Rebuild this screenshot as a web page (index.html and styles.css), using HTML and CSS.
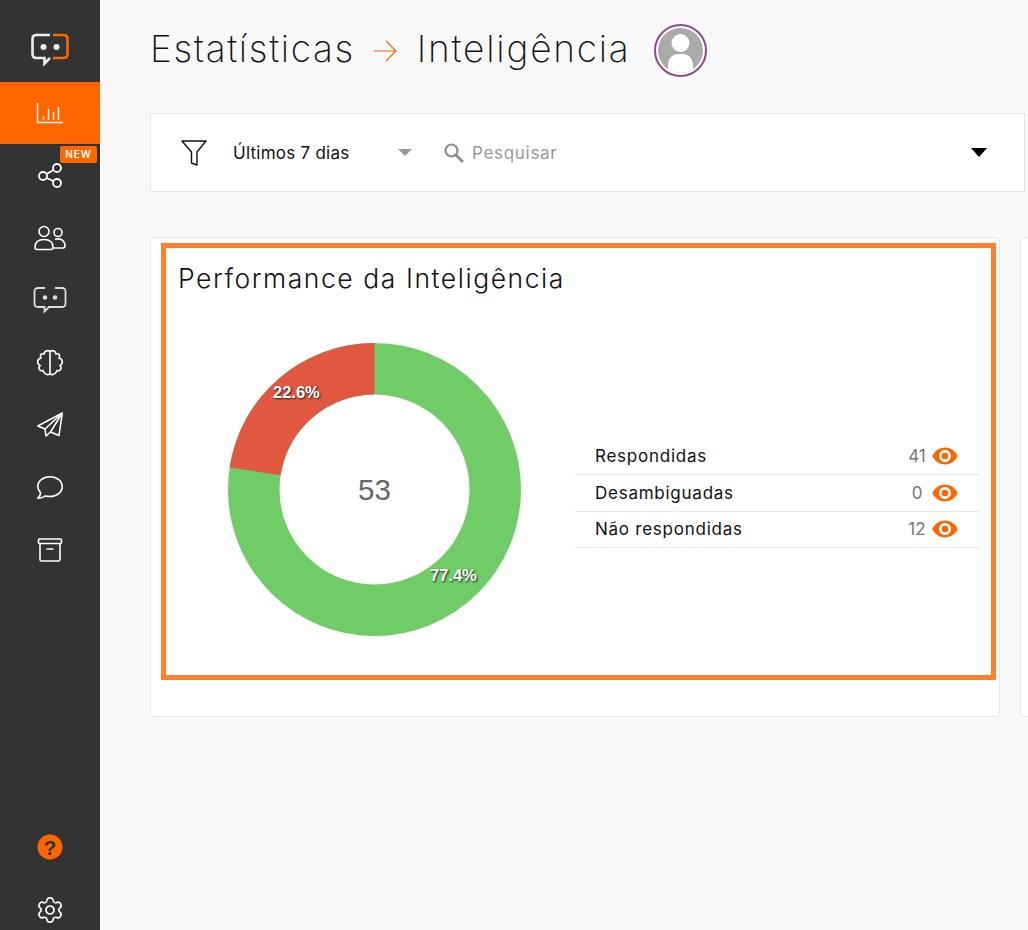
FILE: index.html
```html
<!DOCTYPE html>
<html lang="pt-BR">
<head>
    <meta charset="UTF-8">
    <title>Estatísticas - Inteligência</title>
    <link rel="stylesheet" href="styles.css">
</head>
<body>
    <aside class="sidebar">
        <div class="logo">
            <svg width="40" height="34" viewBox="0 0 40 34" fill="none" stroke-width="2.6">
                <path d="M20 2H6.5Q2.5 2 2.500 6V21Q2.500 25 6.500 25H14.500V30.500L20 25" stroke="#eee"/>
                <path d="M23 2H33.500Q37.500 2 37.500 6V21Q37.500 25 33.500 25H23" stroke="#f60"/>
                <circle cx="13.500" cy="14" r="3" fill="#eee" stroke="none"/>
                <circle cx="26.500" cy="14" r="3" fill="#eee" stroke="none"/>
            </svg>
        </div>
        <nav class="nav">
            <a class="nav-item active" href="#">
                <svg width="28" height="24" viewBox="0 0 28 24" fill="none" stroke="#fff" stroke-width="1.400">
                    <path d="M1.500 2V21.500H27M7.500 19V15M12.500 19V8M17.500 19V11M22.500 19V6"/>
                </svg>
            </a>
            <a class="nav-item" href="#">
                <svg width="26" height="28" viewBox="0 0 26 28" fill="none" stroke="#fff" stroke-width="1.800">
                    <circle cx="6" cy="14" r="4"/>
                    <circle cx="20" cy="6" r="4"/>
                    <circle cx="20" cy="21" r="4"/>
                    <path d="M9.500 12L16.500 8M9.500 16L16.500 19"/>
                </svg>
                <span class="badge">NEW</span>
            </a>
            <a class="nav-item" href="#">
                <svg width="34" height="26" viewBox="0 0 34 26" fill="none" stroke="#fff" stroke-width="1.600">
                    <circle cx="11" cy="6.500" r="5"/>
                    <path d="M2 22.500C2 17 5 14.500 11 14.500C17 14.500 20 17 20 22.500Q20 24.500 18 24.500H4Q2 24.500 2 22.500Z"/>
                    <circle cx="25" cy="7.500" r="4"/>
                    <path d="M22 14.200C28 13 32 15.500 32 21Q32 23 30 23H20.500"/>
                </svg>
            </a>
            <a class="nav-item" href="#">
                <svg width="34" height="28" viewBox="0 0 34 28" fill="none" stroke="#ddd" stroke-width="1.800">
                    <path d="M12 2H5Q1.500 2 1.500 5.500V17.500Q1.500 21 5 21H11.500V25.500L16 21H29Q32.500 21 32.500 17.500V5.500Q32.500 2 29 2H22"/>
                    <circle cx="12" cy="11.500" r="2.300" fill="#ddd" stroke="none"/>
                    <circle cx="22" cy="11.500" r="2.300" fill="#ddd" stroke="none"/>
                </svg>
            </a>
            <a class="nav-item" href="#">
                <svg width="28" height="28" viewBox="0 0 28 28" fill="none" stroke="#fff" stroke-width="1.600">
                    <path d="M14 2.500V25C11.500 26.500 8 25 7 21.500C4 22.500 1.500 19.500 4 16.500C0.500 14.500 1 10 5 9C3.500 6 5 4 8 5C8.500 1.500 12 1 14 2.500Z"/>
                    <path d="M14 2.500C16 1 19.500 1.500 20 5C23 4 24.500 6 23 9C27 10 27.500 14.500 24 16.500C26.500 19.500 24 22.500 21 21.500C20 25 16.500 26.500 14 25"/>
                </svg>
            </a>
            <a class="nav-item" href="#">
                <svg width="28" height="28" viewBox="0 0 28 28" fill="none" stroke="#fff" stroke-width="1.600" stroke-linejoin="round">
                    <path d="M26.300 2L1.800 15L9 18L10 25L14.500 21L23 24.500Z"/>
                    <path d="M26.300 2L9 18M14.500 21L26.300 2"/>
                </svg>
            </a>
            <a class="nav-item" href="#">
                <svg width="28" height="26" viewBox="0 0 28 26" fill="none" stroke="#fff" stroke-width="1.600" stroke-linejoin="round">
                    <path d="M14 1.800C7 1.800 1.800 6 1.800 11.500C1.800 14 3 16 4.500 17.500C4.500 20 3.500 22 1.800 23.200C5 23.300 7.500 22.500 9 21C10.500 21.300 12 21.500 14 21.500C21 21.500 26.200 17 26.200 11.500C26.200 6 21 1.800 14 1.800Z"/>
                </svg>
            </a>
            <a class="nav-item" href="#">
                <svg width="28" height="26" viewBox="0 0 28 26" fill="none" stroke="#fff" stroke-width="1.600">
                    <rect x="2.500" y="2" width="23" height="4.500" rx="1"/>
                    <path d="M4 6.500V22.500Q4 24 5.500 24H22.500Q24 24 24 22.500V6.500M10.500 12H17.500"/>
                </svg>
            </a>
        </nav>
        <div class="nav-bottom">
            <a class="nav-item" href="#">
                <svg width="26" height="26" viewBox="0 0 26 26">
                    <circle cx="13" cy="13" r="12.500" fill="#f60"/>
                    <text class="help-mark" x="13" y="20.500" text-anchor="middle">?</text>
                </svg>
            </a>
            <a class="nav-item" href="#">
                <svg width="28" height="28" viewBox="-14 -14 28 28" fill="none" stroke="#fff" stroke-width="1.700">
                    <defs>
                        <path id="tooth" d="M-4.400 -7.600C-3.400 -8 -3.200 -8.600 -3 -10C-2.800 -11.600 -2 -12.200 0 -12.200C2 -12.200 2.800 -11.600 3 -10C3.200 -8.600 3.400 -8 4.400 -7.600"/>
                    </defs>
                    <use href="#tooth"/>
                    <use href="#tooth" transform="rotate(60)"/>
                    <use href="#tooth" transform="rotate(120)"/>
                    <use href="#tooth" transform="rotate(180)"/>
                    <use href="#tooth" transform="rotate(240)"/>
                    <use href="#tooth" transform="rotate(300)"/>
                    <circle r="4"/>
                </svg>
            </a>
        </div>
    </aside>

    <main class="main">
        <header class="page-header">
            <h1>Estatísticas</h1>
            <svg class="crumb-arrow" width="24" height="22" viewBox="0 0 24 22" fill="none" stroke="#f60" stroke-width="1.200">
                <path d="M1 11H23M13 1L23 11L13 21"/>
            </svg>
            <h1 class="crumb-current">Inteligência</h1>
            <div class="avatar">
                <svg width="45" height="45" viewBox="0 0 45 45">
                    <defs>
                        <clipPath id="avatar-clip"><circle cx="22.500" cy="22.500" r="22.500"/></clipPath>
                    </defs>
                    <g clip-path="url(#avatar-clip)">
                        <rect width="45" height="45" fill="#aaa"/>
                        <circle cx="22.500" cy="15" r="9" fill="#fff"/>
                        <rect x="10" y="26" width="25" height="24" rx="10" fill="#fff"/>
                    </g>
                </svg>
            </div>
        </header>

        <section class="filter-bar">
            <svg class="filter-icon" width="26" height="26" viewBox="0 0 26 26" fill="none" stroke="#111" stroke-width="1.400" stroke-linejoin="round">
                <path d="M1 1H25L16 12V25L10.500 23V12Z"/>
            </svg>
            <span class="period">Últimos 7 dias</span>
            <span class="caret caret-gray"></span>
            <svg class="search-icon" width="20" height="20" viewBox="0 0 20 20" fill="none" stroke="#8c8c8c" stroke-width="2.200">
                <circle cx="7.500" cy="7.500" r="6"/>
                <path d="M12 12L19 19" stroke-width="2.800"/>
            </svg>
            <span class="search-text">Pesquisar</span>
            <span class="caret caret-black"></span>
        </section>

        <section class="cards">
            <article class="card">
                <div class="frame">
                    <h2>Performance da Inteligência</h2>
                    <div class="frame-body">
                        <div class="donut">
                            <svg width="293" height="293" viewBox="0 0 293 293">
                                <circle cx="146.500" cy="146.500" r="120.750" fill="none" stroke="#6fcc67" stroke-width="51.500"/>
                                <path d="M146.500 0A146.500 146.500 0 0 0 1.660 124.500L52.600 132.200A95 95 0 0 1 146.500 51.500Z" fill="#e05840"/>
                            </svg>
                            <span class="donut-total">53</span>
                            <span class="slice-label label-red">22.6%</span>
                            <span class="slice-label label-green">77.4%</span>
                        </div>
                        <ul class="legend">
                            <li class="legend-row">
                                <span class="legend-name">Respondidas</span>
                                <span class="legend-count">41</span>
                                <svg class="eye" width="26" height="18" viewBox="0 0 26 18"><use href="#eye-icon"/></svg>
                            </li>
                            <li class="legend-row">
                                <span class="legend-name">Desambiguadas</span>
                                <span class="legend-count">0</span>
                                <svg class="eye" width="26" height="18" viewBox="0 0 26 18"><use href="#eye-icon"/></svg>
                            </li>
                            <li class="legend-row">
                                <span class="legend-name">Não respondidas</span>
                                <span class="legend-count">12</span>
                                <svg class="eye" width="26" height="18" viewBox="0 0 26 18"><use href="#eye-icon"/></svg>
                            </li>
                        </ul>
                    </div>
                </div>
            </article>
            <article class="card"></article>
        </section>
    </main>

    <svg width="0" height="0" class="sprites">
        <symbol id="eye-icon" viewBox="0 0 26 18">
            <path fill-rule="evenodd" fill="#f60" d="M13 0.500C7 0.500 2.500 4.500 0.300 9C2.500 13.500 7 17.500 13 17.500C19 17.500 23.500 13.500 25.700 9C23.500 4.500 19 0.500 13 0.500ZM13 3C16.300 3 19 5.700 19 9C19 12.300 16.300 15 13 15C9.700 15 7 12.300 7 9C7 5.700 9.700 3 13 3Z"/>
            <circle cx="13" cy="9" r="3.300" fill="#f60"/>
        </symbol>
    </svg>
</body>
</html>
```

FILE: styles.css
```css
* {
    box-sizing: border-box;
}

html, body {
    height: 100%;
}

body {
    display: flex;
    margin: 0;
    overflow: hidden;
    background: #f8f8f8;
    font-family: Inter, sans-serif;
    color: #111;
}

.sprites {
    position: absolute;
}

/* sidebar */
.sidebar {
    display: flex;
    flex-direction: column;
    flex: 0 0 100px;
    height: 930px;
    overflow: hidden;
    background: #333;
}

.logo {
    display: flex;
    justify-content: center;
    padding-top: 33px;
    height: 82px;
}

.nav-item {
    position: relative;
    display: flex;
    align-items: center;
    justify-content: center;
    height: 62.400px;
}

.nav-item.active {
    background: #f60;
}

.nav-bottom {
    margin-top: auto;
    margin-bottom: -11px;
}

.badge {
    position: absolute;
    top: 2px;
    right: 3px;
    padding: 0 5px;
    height: 17px;
    border-radius: 2px;
    background: #f60;
    color: #fff;
    font-size: 10px;
    font-weight: 600;
    line-height: 17px;
    letter-spacing: 1px;
}

.help-mark {
    font-family: "Liberation Sans", sans-serif;
    font-size: 21px;
    font-weight: 700;
    fill: #333;
}

/* header */
.main {
    flex: 1;
    min-width: 0;
    overflow: hidden;
    padding-left: 50px;
}

.page-header {
    display: flex;
    align-items: center;
    height: 53px;
    margin: 24px 0 36px;
}

h1 {
    margin: 0 0 3px;
    font-size: 37px;
    font-weight: 200;
    line-height: 48px;
    letter-spacing: 1.650px;
    color: #111;
}

.crumb-current {
    letter-spacing: 1.800px;
}

.crumb-arrow {
    margin: 0 20px 0 18px;
}

.avatar {
    display: flex;
    align-items: center;
    justify-content: center;
    width: 53px;
    height: 53px;
    margin-left: 23px;
    border: 2px solid #8e4a8e;
    border-radius: 50%;
    background: #fff;
}

/* filter bar */
.filter-bar {
    display: flex;
    align-items: center;
    width: 875px;
    height: 79px;
    padding-left: 30px;
    border: 1px solid #e6e6e6;
    background: #fff;
}

.period {
    margin-left: 26px;
    width: 165px;
    font-size: 17px;
    letter-spacing: 0.250px;
}

.caret {
    width: 0;
    height: 0;
    border-left: 7px solid transparent;
    border-right: 7px solid transparent;
}

.caret-gray {
    border-top: 7px solid #999;
}

.caret-black {
    margin-left: auto;
    margin-right: 37px;
    border-left-width: 8px;
    border-right-width: 8px;
    border-top: 9px solid #000;
}

.search-icon {
    margin-left: 32px;
}

.search-text {
    margin-left: 8px;
    font-size: 17px;
    letter-spacing: 0.700px;
    color: #999;
}

/* cards */
.cards {
    display: flex;
    gap: 20px;
    width: 878px;
    overflow: hidden;
    margin-top: 45px;
}

.card {
    flex: 0 0 850px;
    height: 480px;
    padding: 5px 3px 0 10px;
    border: 1px solid #e6e6e6;
    border-radius: 4px;
    background: #fff;
}

.frame {
    width: 835px;
    height: 437px;
    padding: 12px 12px 0 12px;
    border: 5px solid #ff7f2a;
}

h2 {
    margin: 0;
    font-size: 26.500px;
    font-weight: 300;
    line-height: 36px;
    letter-spacing: 1.550px;
    color: #111;
}

.frame-body {
    display: flex;
    align-items: center;
    margin-top: 47px;
    padding-left: 50px;
}

.donut {
    position: relative;
    flex: 0 0 293px;
    height: 293px;
}

.donut svg {
    display: block;
}

.donut-total {
    position: absolute;
    top: 129px;
    left: 0;
    width: 100%;
    text-align: center;
    font-family: "Liberation Sans", sans-serif;
    font-size: 29.500px;
    line-height: 36px;
    color: #666;
}

.slice-label {
    position: absolute;
    font-family: "Liberation Sans", sans-serif;
    font-size: 16.500px;
    font-weight: 700;
    line-height: 20px;
    color: #fff;
    text-shadow: 1px 1px 2px #222;
}

.label-red {
    top: 39px;
    left: 45px;
}

.label-green {
    top: 222px;
    left: 202px;
}

.legend {
    flex: 0 0 404px;
    margin: 8px 0 0 54px;
    padding: 0;
    list-style: none;
}

.legend-row {
    display: flex;
    align-items: center;
    height: 36.500px;
    padding: 0 21px 1px 20px;
    border-bottom: 1px solid #e6e6e6;
    font-size: 17px;
    letter-spacing: 0.750px;
}

.legend-name {
    flex: 1;
    color: #111;
}

.legend-count {
    width: 24px;
    margin-right: -1px;
    text-align: center;
    letter-spacing: 0;
    color: #777;
}

.eye {
    margin-left: 4px;
}
```
